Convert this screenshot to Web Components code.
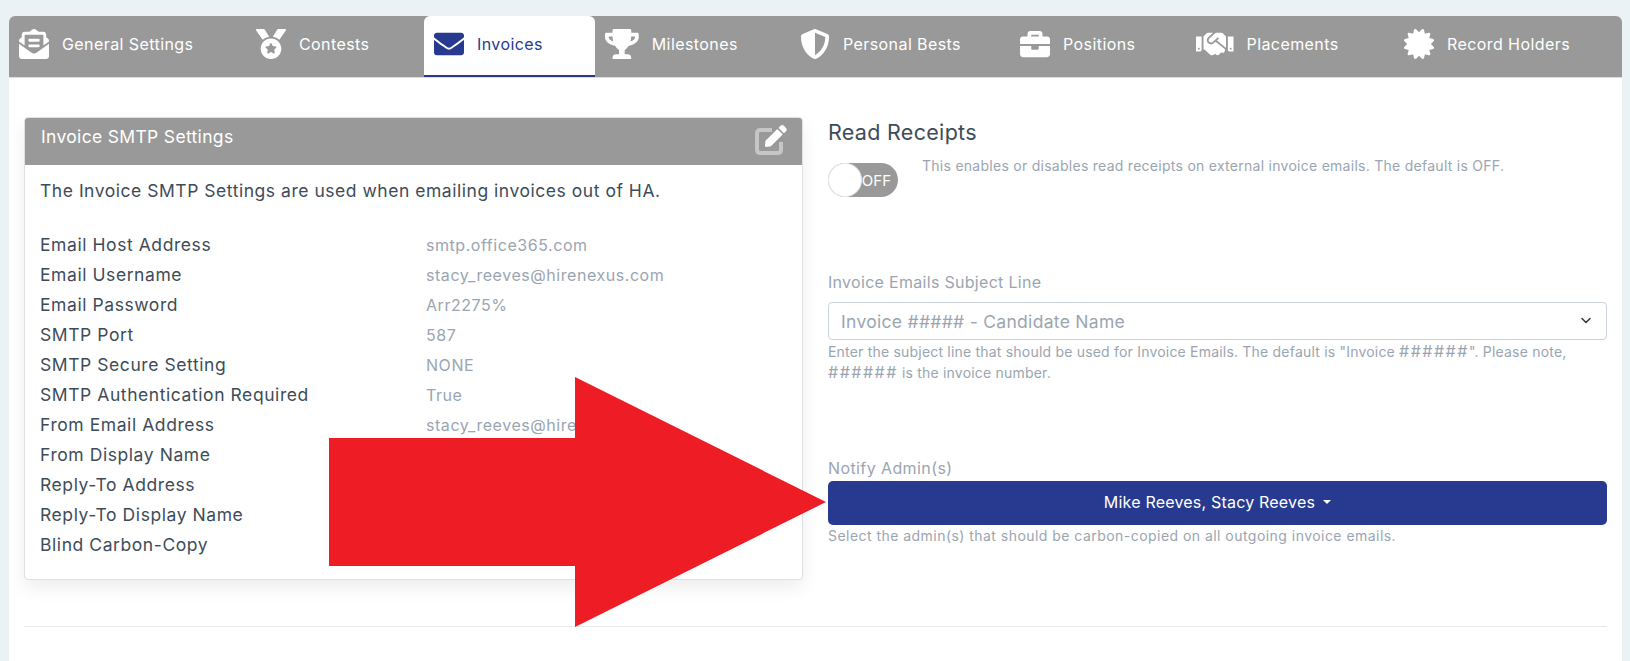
<!DOCTYPE html>
<html>
<head>
<meta charset="utf-8">
<title>Invoices</title>
<style>
  html, body { margin: 0; height: 661px; overflow: hidden; }
  body {
    background: #eaf2f6;
    padding: 16px 8px 0 9px;
    box-sizing: border-box;
    font-family: Inter, "Liberation Sans", sans-serif;
    color: #3e4c59;
  }
</style>
</head>
<body>
<settings-page>
  <tab-bar slot="tabs">
    <tab-item icon="envelope-open" width="237">General Settings</tab-item>
    <tab-item icon="medal" width="178">Contests</tab-item>
    <tab-item icon="envelope" width="171" active>Invoices</tab-item>
    <tab-item icon="trophy" width="195">Milestones</tab-item>
    <tab-item icon="shield" width="220">Personal Bests</tab-item>
    <tab-item icon="briefcase" width="176">Positions</tab-item>
    <tab-item icon="handshake" width="208">Placements</tab-item>
    <tab-item icon="certificate" width="228">Record Holders</tab-item>
  </tab-bar>

  <smtp-card slot="left" heading="Invoice SMTP Settings">
    <p slot="intro">The Invoice SMTP Settings are used when emailing invoices out of HA.</p>
    <info-row label="Email Host Address" value="smtp.office365.com"></info-row>
    <info-row label="Email Username" value="stacy_reeves@hirenexus.com"></info-row>
    <info-row label="Email Password" value="Arr2275%"></info-row>
    <info-row label="SMTP Port" value="587"></info-row>
    <info-row label="SMTP Secure Setting" value="NONE"></info-row>
    <info-row label="SMTP Authentication Required" value="True"></info-row>
    <info-row label="From Email Address" value="stacy_reeves@hirenexus.com"></info-row>
    <info-row label="From Display Name"></info-row>
    <info-row label="Reply-To Address"></info-row>
    <info-row label="Reply-To Display Name"></info-row>
    <info-row label="Blind Carbon-Copy"></info-row>
  </smtp-card>

  <read-receipts slot="right"></read-receipts>
  <subject-field slot="right"></subject-field>
  <admin-field slot="right"></admin-field>
</settings-page>
<big-arrow></big-arrow>

<script>
const ICONS = {
  "envelope-open": ["0 0 512 512", "M176 216h160c8.84 0 16-7.16 16-16v-16c0-8.84-7.16-16-16-16H176c-8.84 0-16 7.16-16 16v16c0 8.84 7.16 16 16 16zm-16 80c0 8.84 7.16 16 16 16h160c8.84 0 16-7.16 16-16v-16c0-8.84-7.16-16-16-16H176c-8.84 0-16 7.16-16 16v16zm96 121.13c-16.42 0-32.84-5.06-46.86-15.19L0 250.86V464c0 26.51 21.49 48 48 48h416c26.51 0 48-21.49 48-48V250.86L302.86 401.94c-14.02 10.12-30.44 15.19-46.86 15.19zm237.61-254.18c-8.85-6.94-17.24-13.47-29.61-22.81V96c0-26.51-21.49-48-48-48h-77.55c-3.04-2.2-5.87-4.26-9.04-6.56C312.6 29.17 279.2-.35 256 0c-23.2-.35-56.59 29.17-73.41 41.44-3.17 2.3-6 4.36-9.04 6.56H96c-26.51 0-48 21.49-48 48v44.14c-12.37 9.33-20.76 15.87-29.61 22.81A47.995 47.995 0 0 0 0 200.72v10.65l96 69.35V96h320v184.72l96-69.35v-10.65c0-14.74-6.78-28.67-18.39-37.77z"],
  "medal": ["0 0 512 512", "M223.75 130.75L154.62 15.54A31.997 31.997 0 0 0 127.18 0H16.03C3.08 0-4.5 14.57 2.92 25.18l111.27 158.96c29.72-27.77 67.52-46.83 109.56-53.39zM495.97 0H384.82c-11.24 0-21.66 5.9-27.44 15.54l-69.13 115.21c42.04 6.56 79.84 25.62 109.56 53.38L509.08 25.18C516.5 14.57 508.92 0 495.97 0zM256 160c-97.2 0-176 78.8-176 176s78.8 176 176 176 176-78.8 176-176-78.8-176-176-176zm92.52 157.26l-37.93 36.96 8.97 52.22c1.6 9.36-8.26 16.51-16.65 12.09L256 393.88l-46.9 24.65c-8.4 4.45-18.25-2.74-16.65-12.09l8.97-52.22-37.93-36.96c-6.82-6.64-3.05-18.23 6.35-19.59l52.43-7.64 23.43-47.52c1.78-3.58 5.27-5.4 8.77-5.4 3.52 0 7.03 1.84 8.8 5.4l23.43 47.52 52.43 7.64c9.4 1.36 13.17 12.95 6.35 19.59z"],
  "envelope": ["0 0 512 512", "M502.3 190.8c3.9-3.1 9.7-.2 9.7 4.7V400c0 26.5-21.5 48-48 48H48c-26.5 0-48-21.5-48-48V195.6c0-5 5.7-7.8 9.7-4.7 22.4 17.4 52.1 39.5 154.1 113.6 21.1 15.4 56.7 47.8 92.2 47.6 35.7.3 72-32.8 92.3-47.6 102-74.1 131.6-96.3 154-113.7zM256 320c23.2.4 56.6-29.2 73.4-41.4 132.7-96.3 142.8-104.7 173.4-128.7 5.8-4.5 9.2-11.5 9.2-18.9v-19c0-26.5-21.5-48-48-48H48C21.5 64 0 85.5 0 112v19c0 7.4 3.4 14.3 9.2 18.9 30.6 23.9 40.7 32.4 173.4 128.7 16.8 12.2 50.2 41.8 73.4 41.4z"],
  "trophy": ["0 0 576 512", "M552 64H448V24c0-13.3-10.7-24-24-24H152c-13.3 0-24 10.7-24 24v40H24C10.7 64 0 74.7 0 88v56c0 35.7 22.5 72.4 61.9 100.7 31.5 22.7 69.8 37.1 110 41.7C203.3 338.5 240 360 240 360v72h-48c-35.3 0-64 20.7-64 56v12c0 6.6 5.4 12 12 12h296c6.6 0 12-5.4 12-12v-12c0-35.3-28.7-56-64-56h-48v-72s36.7-21.5 68.1-73.6c40.3-4.6 78.6-19 110-41.7 39.3-28.3 61.9-65 61.9-100.7V88c0-13.3-10.7-24-24-24zM99.3 192.8C74.9 175.2 64 155.6 64 144v-16h64.2c1 32.6 5.8 61.2 12.8 86.2-15.1-5.2-29.2-12.4-41.7-21.4zM512 144c0 16.1-17.7 36.1-35.3 48.8-12.5 9-26.7 16.2-41.8 21.4 7-25 11.8-53.6 12.8-86.2H512v16z"],
  "shield": ["0 0 512 512", "M466.5 83.7l-192-80a48.15 48.15 0 0 0-36.9 0l-192 80C27.7 91.1 16 108.6 16 128c0 198.5 114.5 335.7 221.5 380.3 11.8 4.9 25.1 4.9 36.9 0C360.1 472.6 496 349.3 496 128c0-19.4-11.7-36.9-29.5-44.3zM256.1 446.3l-.1-381 175.9 73.3c-3.3 151.4-82.1 261.1-175.8 307.7z"],
  "briefcase": ["0 0 512 512", "M320 336c0 8.84-7.16 16-16 16h-96c-8.84 0-16-7.16-16-16v-48H0v144c0 25.6 22.4 48 48 48h416c25.6 0 48-22.4 48-48V288H320v48zm144-208h-80V80c0-25.6-22.4-48-48-48H176c-25.6 0-48 22.4-48 48v48H48c-25.6 0-48 22.4-48 48v80h512v-80c0-25.6-22.4-48-48-48zm-144 0H192V96h128v32z"],
  "handshake": ["0 0 640 512", "M434.7 64h-85.9c-8 0-15.7 3-21.6 8.4l-98.3 90c-.1.1-.2.3-.3.4-16.6 15.6-16.3 40.5-2.1 56 12.7 13.9 39.4 17.6 56.1 2.7.1-.1.3-.1.4-.2l79.9-73.2c6.5-5.9 16.7-5.5 22.6 1 6 6.5 5.5 16.6-1 22.6l-26.1 23.9L504 313.8c2.9 2.4 5.5 5 7.9 7.7V128l-54.6-54.6c-5.9-6-14.1-9.4-22.6-9.4zM544 128.2v223.9c0 17.7 14.3 32 32 32h64V128.2h-96zm48 223.9c-8.8 0-16-7.2-16-16s7.2-16 16-16 16 7.2 16 16-7.2 16-16 16zM0 384h64c17.7 0 32-14.3 32-32V128.2H0V384zm48-63.9c8.8 0 16 7.2 16 16s-7.2 16-16 16-16-7.2-16-16c0-8.9 7.2-16 16-16zm435.9 18.6L334.6 217.5l-30 27.5c-29.7 27.1-75.2 24.5-101.7-4.4-26.9-29.4-24.8-74.9 4.4-101.7L289.1 64h-83.8c-8.5 0-16.6 3.4-22.6 9.4L128 128v223.9h18.3l90.5 81.9c27.4 22.3 67.7 18.1 90-9.3l.2-.2 17.9 15.5c15.9 13 39.4 10.5 52.3-5.4l31.4-38.6 5.4 4.4c13.7 11.1 33.9 9.1 45-4.7l9.5-11.7c11.2-13.8 9.1-33.9-4.6-45.1z"],
  "certificate": ["0 0 512 512", "M458.622 255.92l45.985-45.005c13.708-12.977 7.316-36.039-10.664-40.339l-62.65-15.99 17.661-62.015c4.991-17.838-11.829-34.663-29.661-29.671l-61.994 17.667-15.984-62.671C337.085.197 313.765-6.276 300.99 7.228L256 53.57 211.011 7.229c-12.63-13.351-36.047-7.234-40.325 10.668l-15.984 62.671-61.995-17.667C74.87 57.907 58.056 74.738 63.046 92.572l17.661 62.015-62.65 15.99C.069 174.878-6.31 197.944 7.392 210.915l45.985 45.005-45.985 45.004c-13.708 12.977-7.316 36.039 10.664 40.339l62.65 15.99-17.661 62.015c-4.991 17.838 11.829 34.663 29.661 29.671l61.994-17.667 15.984 62.671c4.439 18.575 27.696 24.018 40.325 10.668L256 458.61l44.989 46.001c12.5 13.488 35.987 7.486 40.325-10.668l15.984-62.671 61.994 17.667c17.836 4.994 34.651-11.837 29.661-29.671l-17.661-62.015 62.65-15.99c17.987-4.302 24.366-27.367 10.664-40.339l-45.984-45.004z"]
};

// pencil part of the edit icon, the box around it is drawn apart in a dimmer grey
const PENCIL = "M402.6 83.2l90.2 90.2c3.8 3.8 3.8 10 0 13.8L274.4 405.6l-92.8 10.3c-12.4 1.4-22.9-9.1-21.5-21.5l10.3-92.8L388.8 83.2c3.8-3.8 10-3.8 13.8 0zm162-22.9l-48.8-48.8c-15.2-15.2-39.9-15.2-55.2 0l-35.4 35.4c-3.8 3.8-3.8 10 0 13.8l90.2 90.2c3.8 3.8 10 3.8 13.8 0l35.4-35.4c15.2-15.3 15.2-40 0-55.2z";

function iconSvg(name) {
  const [box, d] = ICONS[name];
  return `<svg viewBox="${box}" aria-hidden="true"><path fill="currentColor" d="${d}"/></svg>`;
}

class SettingsPage extends HTMLElement {
  constructor() {
    super();
    this.root = this.attachShadow({ mode: "open" });
    this.root.innerHTML = `
      <style>
        :host {
          display: block;
          height: 645px;
          background: #fff;
          border-radius: 6px 6px 0 0;
          overflow: hidden;
        }
        .content { padding: 39px 15px 0; }
        .columns {
          display: grid;
          grid-template-columns: 779px 779px;
          gap: 25px;
          align-items: start;
        }
        .right { display: flex; flex-direction: column; }
        hr { border: 0; border-top: 1px solid #e6e9ec; margin: 46px 0 0; }
      </style>
      <slot name="tabs"></slot>
      <div class="content">
        <div class="columns">
          <div><slot name="left"></slot></div>
          <div class="right"><slot name="right"></slot></div>
        </div>
        <hr>
      </div>
    `;
  }
}

class TabBar extends HTMLElement {
  constructor() {
    super();
    this.root = this.attachShadow({ mode: "open" });
    this.root.innerHTML = `
      <style>
        :host {
          display: flex;
          height: 61px;
          background: #999;
          border-bottom: 1px solid #ddd;
          overflow: hidden;
        }
      </style>
      <slot></slot>
    `;
  }
}

class TabItem extends HTMLElement {
  constructor() {
    super();
    this.root = this.attachShadow({ mode: "open" });
    this.root.innerHTML = `
      <style>
        :host {
          display: flex;
          flex: 0 0 auto;
          align-items: center;
          gap: 13px;
          box-sizing: border-box;
          padding: 0 0 5px 10px;
          color: #fff;
          font-size: 16px;
          letter-spacing: .42px;
        }
        :host([active]) {
          background: #fff;
          color: #273a90;
          border-radius: 6px 6px 0 0;
          border-bottom: 2px solid #273a90;
          padding-bottom: 3px;
        }
        svg { height: 30px; display: block; flex: none; }
      </style>
      <span class="icon"></span><slot></slot>
    `;
  }

  connectedCallback() {
    this.style.width = this.getAttribute("width") + "px";
    const name = this.getAttribute("icon");
    const box = ICONS[name][0].split(" ");
    const icon = this.root.querySelector(".icon");
    icon.innerHTML = iconSvg(name);
    icon.firstChild.style.width = (30 * box[2] / box[3]) + "px";
  }
}

class SmtpCard extends HTMLElement {
  constructor() {
    super();
    this.root = this.attachShadow({ mode: "open" });
    this.root.innerHTML = `
      <style>
        :host {
          display: block;
          background: #fff;
          border: 1px solid #dde1e5;
          border-radius: 4px;
          box-shadow: 0 8px 18px rgba(0, 0, 0, .07);
          overflow: hidden;
        }
        header {
          display: flex;
          justify-content: space-between;
          align-items: flex-start;
          height: 47px;
          box-sizing: border-box;
          padding: 7px 15px 0 16px;
          background: #999;
          color: #fff;
        }
        h2 { margin: 0; font-size: 17.5px; font-weight: 400; line-height: 24px; letter-spacing: .33px; }
        svg { width: 32px; height: 30px; display: block; }
        .body { padding: 14px 15px 19px; }
        ::slotted(p) { margin: 0 0 27px; font-size: 17.5px; line-height: 24px; letter-spacing: .53px; }
      </style>
      <header>
        <h2></h2>
        <svg viewBox="0 0 32 30" aria-hidden="true">
          <path d="M17 5H5.5Q2 5 2 8.5V24.5Q2 28 5.5 28H22.5Q26 28 26 24.5V17" fill="none" stroke="#c6c6c6" stroke-width="4"/>
          <path fill="#fff" transform="translate(1.5 0) scale(.0526)" d="${PENCIL}"/>
        </svg>
      </header>
      <div class="body">
        <slot name="intro"></slot>
        <slot></slot>
      </div>
    `;
  }

  connectedCallback() {
    this.root.querySelector("h2").textContent = this.getAttribute("heading");
  }
}

class InfoRow extends HTMLElement {
  constructor() {
    super();
    this.root = this.attachShadow({ mode: "open" });
    this.root.innerHTML = `
      <style>
        :host {
          display: grid;
          grid-template-columns: 386px 1fr;
          height: 30px;
          align-items: center;
          font-size: 17.5px;
          letter-spacing: .57px;
        }
        .label { padding-bottom: 2px; }
        .value { color: #9aa5b1; font-size: 16px; letter-spacing: .55px; }
      </style>
      <span class="label"></span><span class="value"></span>
    `;
  }

  connectedCallback() {
    this.root.querySelector(".label").textContent = this.getAttribute("label");
    this.root.querySelector(".value").textContent = this.getAttribute("value") || "";
  }
}

class ToggleSwitch extends HTMLElement {
  constructor() {
    super();
    this.root = this.attachShadow({ mode: "open" });
    this.root.innerHTML = `
      <style>
        :host {
          display: flex;
          align-items: center;
          justify-content: space-between;
          flex: none;
          width: 70px;
          height: 34px;
          box-sizing: border-box;
          padding-right: 7px;
          background: #999;
          border-radius: 17px;
          color: #fff;
          font-size: 15px;
        }
        i {
          width: 34px;
          height: 34px;
          box-sizing: border-box;
          background: #fff;
          border: 1px solid #e8e8e8;
          border-radius: 50%;
        }
      </style>
      <i></i><span>OFF</span>
    `;
  }
}

class ReadReceipts extends HTMLElement {
  constructor() {
    super();
    this.root = this.attachShadow({ mode: "open" });
    this.root.innerHTML = `
      <style>
        :host { display: block; height: 154px; }
        h3 { margin: 0 0 16px; font-size: 21.5px; font-weight: 400; line-height: 30px; letter-spacing: .3px; }
        .row { display: flex; gap: 24px; align-items: flex-start; }
        p { margin: -7px 0 0; color: #9aa5b1; font-size: 14px; line-height: 20px; letter-spacing: .27px; }
      </style>
      <h3>Read Receipts</h3>
      <div class="row">
        <toggle-switch></toggle-switch>
        <p>This enables or disables read receipts on external invoice emails. The default is OFF.</p>
      </div>
    `;
  }
}

class SubjectField extends HTMLElement {
  constructor() {
    super();
    this.root = this.attachShadow({ mode: "open" });
    this.root.innerHTML = `
      <style>
        :host { display: block; height: 186px; }
        label { display: block; margin-bottom: 9px; color: #9aa5b1; font-size: 16px; line-height: 22px; letter-spacing: .3px; }
        .select {
          display: flex;
          align-items: center;
          justify-content: space-between;
          height: 38px;
          box-sizing: border-box;
          padding: 0 12px;
          border: 1px solid #cbd2d9;
          border-radius: 4px;
          color: #9aa5b1;
          font-size: 17.5px;
          letter-spacing: .3px;
        }
        svg { width: 16px; height: 12px; }
        small { display: block; padding-top: 1px; color: #9aa5b1; font-size: 14px; line-height: 21px; letter-spacing: .2px; }
        b { font-weight: 400; font-size: 16px; letter-spacing: 1.5px; line-height: 1; }
      </style>
      <label>Invoice Emails Subject Line</label>
      <div class="select">
        <span>Invoice ##### - Candidate Name</span>
        <svg viewBox="0 0 16 12"><path d="M4 3.5l4 4 4-4" fill="none" stroke="#343a40" stroke-width="1.6" stroke-linecap="round" stroke-linejoin="round"/></svg>
      </div>
      <small>Enter the subject line that should be used for Invoice Emails. The default is "Invoice <b>######</b>". Please note,<br><b>######</b> is the invoice number.</small>
    `;
  }
}

class AdminField extends HTMLElement {
  constructor() {
    super();
    this.root = this.attachShadow({ mode: "open" });
    this.root.innerHTML = `
      <style>
        :host { display: block; }
        label { display: block; margin-bottom: 2px; color: #9aa5b1; font-size: 16px; line-height: 22px; letter-spacing: .4px; }
        button {
          display: flex;
          align-items: center;
          justify-content: center;
          gap: 8px;
          width: 100%;
          height: 44px;
          padding: 0 0 2px;
          border: 0;
          border-radius: 5px;
          background: #273a90;
          color: #fff;
          font: inherit;
          font-size: 16px;
          letter-spacing: .2px;
        }
        i { border-top: 4px solid #fff; border-left: 4px solid transparent; border-right: 4px solid transparent; }
        small { display: block; color: #9aa5b1; font-size: 14px; line-height: 21px; letter-spacing: .46px; }
      </style>
      <label>Notify Admin(s)</label>
      <button>Mike Reeves, Stacy Reeves <i></i></button>
      <small>Select the admin(s) that should be carbon-copied on all outgoing invoice emails.</small>
    `;
  }
}

class BigArrow extends HTMLElement {
  constructor() {
    super();
    this.root = this.attachShadow({ mode: "open" });
    this.root.innerHTML = `
      <style>
        :host { position: absolute; left: 329px; top: 377px; width: 497px; height: 250px; }
        svg { display: block; width: 100%; height: 100%; }
      </style>
      <svg viewBox="0 0 497 250"><path fill="#ee1c25" d="M0 61H246V0L497 125 246 250V189H0Z"/></svg>
    `;
  }
}

customElements.define("settings-page", SettingsPage);
customElements.define("tab-bar", TabBar);
customElements.define("tab-item", TabItem);
customElements.define("smtp-card", SmtpCard);
customElements.define("info-row", InfoRow);
customElements.define("toggle-switch", ToggleSwitch);
customElements.define("read-receipts", ReadReceipts);
customElements.define("subject-field", SubjectField);
customElements.define("admin-field", AdminField);
customElements.define("big-arrow", BigArrow);
</script>
</body>
</html>
